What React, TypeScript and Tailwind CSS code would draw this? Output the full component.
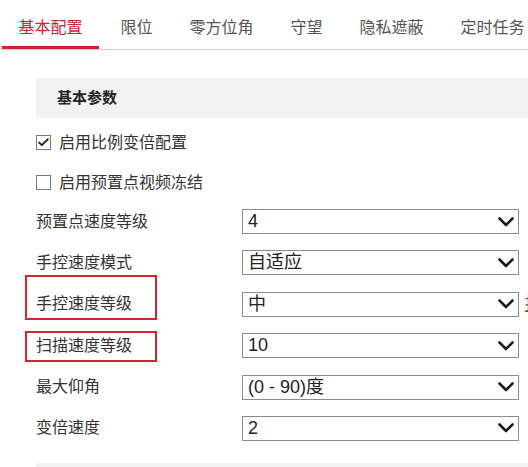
import { Check } from 'lucide-react'

// ─── Data ─────────────────────────────────────────────────────────────────────

const TABS = ['基本配置', '限位', '零方位角', '守望', '隐私遮蔽', '定时任务']

const ROWS: { label: string; value: string; marked?: boolean; hint?: boolean }[] = [
  { label: '预置点速度等级', value: '4' },
  { label: '手控速度模式', value: '自适应' },
  { label: '手控速度等级', value: '中', marked: true, hint: true },
  { label: '扫描速度等级', value: '10', marked: true },
  { label: '最大仰角', value: '(0 - 90)度' },
  { label: '变倍速度', value: '2' },
]

const FONT = { fontFamily: '"Liberation Sans", "Noto Sans CJK SC", sans-serif' }

// ─── Pieces ───────────────────────────────────────────────────────────────────

function Chevron() {
  return (
    <svg width="16" height="10" viewBox="0 0 16 10" className="shrink-0">
      <path d="M1.5 1.5 L8 8 L14.5 1.5" fill="none" stroke="#1a1a1a" strokeWidth="2.6" strokeLinecap="round" strokeLinejoin="round" />
    </svg>
  )
}

function Box({ checked }: { checked?: boolean }) {
  return (
    <span className="flex h-[15px] w-[15px] shrink-0 items-center justify-center border border-[#7a7a7a] bg-white">
      {checked && <Check size={13} strokeWidth={3.4} className="text-[#222]" />}
    </span>
  )
}

// ─── Component ────────────────────────────────────────────────────────────────

export default function App() {
  return (
    <div className="h-[467px] w-[528px] overflow-hidden bg-white text-[#333]" style={FONT}>

      {/* ── Tabs ─────────────────────────────────────────────────────────── */}
      <div className="flex h-[50px] border-b border-[#d4d4d4] whitespace-nowrap">
        {TABS.map((t, i) => (
          <div key={t} className="flex shrink-0 flex-col px-[18.5px] first:pr-[19.5px]">
            <div className={`flex flex-1 items-center pt-[10px] text-[16px] ${i === 0 ? 'text-[#c9252f]' : 'text-[#555]'}`}>
              {t}
            </div>
            <div className={`-mx-[16.5px] h-[3px] ${i === 0 ? 'bg-[#c9252f]' : ''}`} />
          </div>
        ))}
      </div>

      {/* ── Panel ────────────────────────────────────────────────────────── */}
      <div className="ml-[36px] mt-[28px]">
        <div className="flex h-[40px] items-center bg-[#f2f2f2] pl-[21px] text-[15px] font-bold text-[#222]">
          基本参数
        </div>

        <div className="mt-[17px] flex h-[15px] items-center gap-[8px] text-[16px]">
          <Box checked />
          <span>启用比例变倍配置</span>
        </div>
        <div className="mt-[25px] flex h-[15px] items-center gap-[8px] text-[16px]">
          <Box />
          <span>启用预置点视频冻结</span>
        </div>

        <div className="mt-[19px] flex flex-col gap-[16.4px]">
          {ROWS.map(r => (
            <div key={r.label} className="flex h-[25px] items-center whitespace-nowrap">
              <div className="relative w-[206px] shrink-0 text-[16px]">
                {r.label}
                {r.marked && (
                  <span className={`absolute -left-[11px] w-[132px] border-2 border-[#d2262c] ${r.label === '手控速度等级' ? '-top-[17px] h-[45px]' : '-top-[3px] h-[31px]'}`} />
                )}
              </div>
              <div className="flex h-[25px] w-[277px] shrink-0 items-center justify-between border border-[#8c8c8c] pl-[5px] pr-[4px] text-[18px] text-[#222]">
                <span>{r.value}</span>
                <Chevron />
              </div>
              {r.hint && <span className="ml-[6px] shrink-0 text-[18px] text-[#c9252f] underline">提示</span>}
            </div>
          ))}
        </div>

        <div className="mt-[22px] h-[10px] bg-[#f2f2f2]" />
      </div>
    </div>
  )
}
